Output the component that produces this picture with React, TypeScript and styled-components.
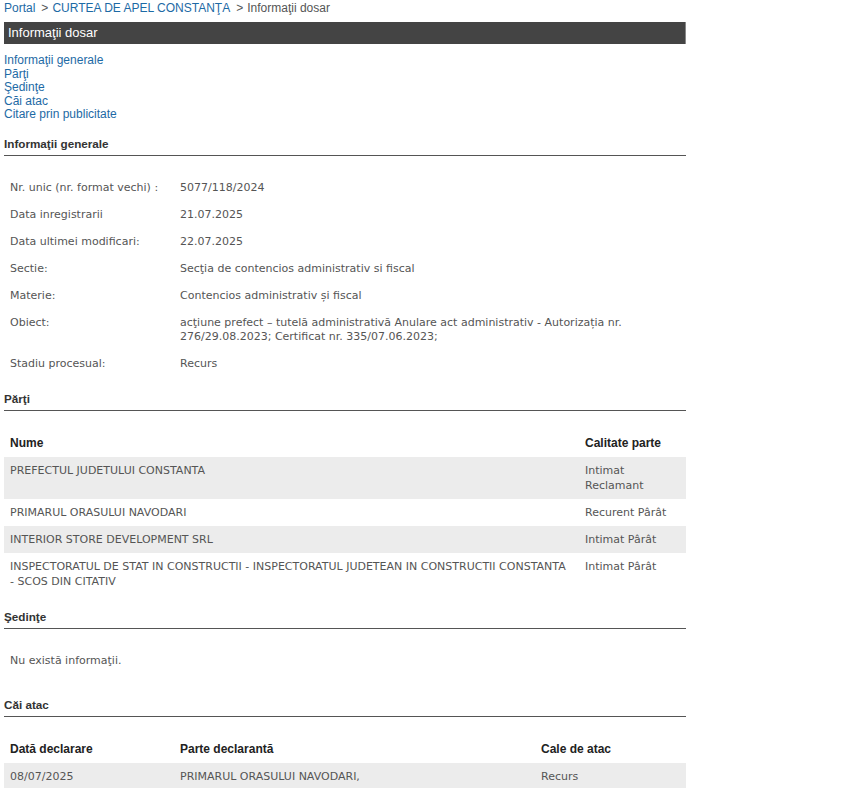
import React from "react";
import styled, { createGlobalStyle } from "styled-components";

const Global = createGlobalStyle`
  html, body { margin: 0; padding: 0; background: #fff; }
  body { font-family: "Liberation Sans", Arial, sans-serif; }
`;

const Page = styled.div`
  width: 682px;
  padding: 1px 0 0 4px;
`;

const Breadcrumb = styled.div`
  font-size: 12px;
  line-height: 14px;
  color: #555;
  height: 21px;
`;

const Crumb = styled.a`
  color: #1d6aa5;
  text-decoration: none;
`;

const Sep = styled.span`
  color: #555;
  margin: 0 4px 0 6px;
`;

const TitleBar = styled.div`
  height: 22px;
  background: #444;
  border-right: 1px solid #888;
  box-sizing: border-box;
  color: #fff;
  font-size: 13px;
  line-height: 22px;
  padding-left: 4px;
`;

const NavList = styled.nav`
  display: flex;
  flex-direction: column;
  margin-top: 10px;
`;

const NavLink = styled.a`
  color: #1d6aa5;
  text-decoration: none;
  font-size: 12px;
  line-height: 13.5px;
`;

const SectionTitle = styled.h2<{ $gap: number }>`
  margin: ${(p) => p.$gap}px 0 0 0;
  font-size: 11.7px;
  line-height: 14px;
  font-weight: bold;
  color: #333;
  padding-bottom: 4px;
  border-bottom: 1px solid #555;
`;

const InfoTable = styled.table`
  border-collapse: collapse;
  margin-top: 19px;
  width: 100%;
  font-family: "DejaVu Sans", sans-serif;
  font-size: 11px;
  color: #555;
`;

const InfoLabel = styled.td`
  width: 160px;
  padding: 6.5px 6px;
  line-height: 14px;
  vertical-align: top;
`;

const InfoValue = styled.td`
  padding: 6.5px 6px 6.5px 4px;
  line-height: 14px;
  vertical-align: top;
`;

const DataTable = styled.table`
  border-collapse: collapse;
  width: 100%;
  margin-top: 19px;
`;

const Th = styled.th<{ $w?: number }>`
  text-align: left;
  font-family: "Liberation Sans", Arial, sans-serif;
  font-size: 12px;
  font-weight: bold;
  color: #222;
  padding: 6px 6px;
  line-height: 15px;
  ${(p) => (p.$w ? `width: ${p.$w}px;` : "")}
`;

const Tr = styled.tr<{ $shade?: boolean }>`
  background: ${(p) => (p.$shade ? "#ececec" : "transparent")};
`;

const Td = styled.td`
  font-family: "DejaVu Sans", sans-serif;
  font-size: 11px;
  color: #555;
  padding: 6px 6px;
  line-height: 15px;
  vertical-align: top;
`;

const Empty = styled.p`
  margin: 25px 0 0 0;
  padding-left: 6px;
  font-family: "DejaVu Sans", sans-serif;
  font-size: 11px;
  line-height: 14px;
  color: #555;
`;

const info: [string, React.ReactNode][] = [
  ["Nr. unic (nr. format vechi) :", "5077/118/2024"],
  ["Data inregistrarii", "21.07.2025"],
  ["Data ultimei modificari:", "22.07.2025"],
  ["Sectie:", "Secţia de contencios administrativ si fiscal"],
  ["Materie:", "Contencios administrativ și fiscal"],
  [
    "Obiect:",
    "acţiune prefect – tutelă administrativă Anulare act administrativ - Autorizația nr. 276/29.08.2023; Certificat nr. 335/07.06.2023;",
  ],
  ["Stadiu procesual:", "Recurs"],
];

const parti = [
  ["PREFECTUL JUDETULUI CONSTANTA", "Intimat Reclamant"],
  ["PRIMARUL ORASULUI NAVODARI", "Recurent Pârât"],
  ["INTERIOR STORE DEVELOPMENT SRL", "Intimat Pârât"],
  [
    "INSPECTORATUL DE STAT IN CONSTRUCTII - INSPECTORATUL JUDETEAN IN CONSTRUCTII CONSTANTA - SCOS DIN CITATIV",
    "Intimat Pârât",
  ],
];

export default function App() {
  return (
    <Page>
      <Global />
      <Breadcrumb>
        <Crumb href="#">Portal</Crumb>
        <Sep>&gt;</Sep>
        <Crumb href="#">CURTEA DE APEL CONSTANŢA</Crumb>
        <Sep>&gt;</Sep>
        Informaţii dosar
      </Breadcrumb>
      <TitleBar>Informaţii dosar</TitleBar>
      <NavList>
        <NavLink href="#">Informaţii generale</NavLink>
        <NavLink href="#">Părţi</NavLink>
        <NavLink href="#">Şedinţe</NavLink>
        <NavLink href="#">Căi atac</NavLink>
        <NavLink href="#">Citare prin publicitate</NavLink>
      </NavList>

      <SectionTitle $gap={15}>Informaţii generale</SectionTitle>
      <InfoTable>
        <tbody>
          {info.map(([l, v]) => (
            <tr key={l}>
              <InfoLabel>{l}</InfoLabel>
              <InfoValue>{v}</InfoValue>
            </tr>
          ))}
        </tbody>
      </InfoTable>

      <SectionTitle $gap={14}>Părţi</SectionTitle>
      <DataTable>
        <thead>
          <tr>
            <Th>Nume</Th>
            <Th $w={95}>Calitate parte</Th>
          </tr>
        </thead>
        <tbody>
          {parti.map(([n, c], i) => (
            <Tr key={n} $shade={i % 2 === 0}>
              <Td>{n}</Td>
              <Td>{c}</Td>
            </Tr>
          ))}
        </tbody>
      </DataTable>

      <SectionTitle $gap={15}>Şedinţe</SectionTitle>
      <Empty>Nu există informaţii.</Empty>

      <SectionTitle $gap={30}>Căi atac</SectionTitle>
      <DataTable>
        <thead>
          <tr>
            <Th $w={158}>Dată declarare</Th>
            <Th>Parte declarantă</Th>
            <Th $w={139}>Cale de atac</Th>
          </tr>
        </thead>
        <tbody>
          <Tr $shade>
            <Td>08/07/2025</Td>
            <Td>PRIMARUL ORASULUI NAVODARI,</Td>
            <Td>Recurs</Td>
          </Tr>
        </tbody>
      </DataTable>
    </Page>
  );
}
